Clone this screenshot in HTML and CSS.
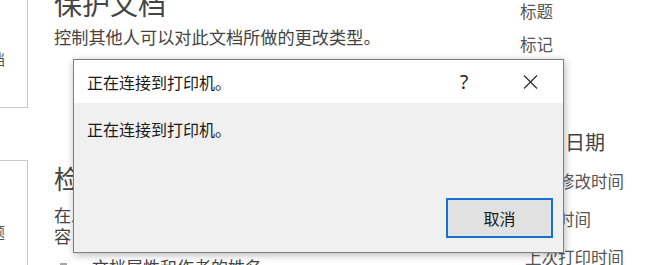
FILE: index.html
```html
<!DOCTYPE html>
<html lang="zh-CN">
<head>
<meta charset="utf-8">
<title>正在连接到打印机</title>
<link rel="stylesheet" href="styles.css">
</head>
<body>
<div class="page">
  <aside class="nav">
    <div class="nav-card first"><span class="nav-text">档</span></div>
    <div class="nav-card second"><span class="nav-text">题</span></div>
  </aside>
  <main class="info">
    <section class="protect">
      <h2 class="big-title">保护文档</h2>
      <p class="desc">控制其他人可以对此文档所做的更改类型。</p>
    </section>
    <section class="inspect">
      <h2 class="mid-title">检查文档</h2>
      <p class="desc">在发布此文件之前，请注意它包含以下内</p>
      <p class="desc">容：</p>
      <ul class="bullets">
        <li>文档属性和作者的姓名</li>
      </ul>
    </section>
  </main>
  <aside class="props">
    <div class="prop-group">
      <div class="prop-row">标题</div>
      <div class="prop-row">标记</div>
      <div class="prop-row">类别</div>
    </div>
    <div class="date-group">
      <h3 class="date-title">相关日期</h3>
      <div class="date-row">上次修改时间</div>
      <div class="date-row">创建时间</div>
      <div class="date-row">上次打印时间</div>
    </div>
  </aside>
</div>

<div class="dialog" role="dialog">
  <div class="dialog-titlebar">
    <span class="dialog-title">正在连接到打印机。</span>
    <span class="tb-btn help">?</span>
    <span class="tb-btn close">
      <svg width="15" height="14" viewBox="0 0 15 14"><path d="M1 0.5 L14 13.5 M14 0.5 L1 13.5" stroke="#2b2b2b" stroke-width="1.2" fill="none"/></svg>
    </span>
  </div>
  <div class="dialog-body">
    <p class="dialog-msg">正在连接到打印机。</p>
    <div class="dialog-actions">
      <button class="cancel-btn" type="button">取消</button>
    </div>
  </div>
</div>
</body>
</html>
```

FILE: styles.css
```css
* { box-sizing: border-box; }
html, body {
  margin: 0;
  padding: 0;
  width: 650px;
  height: 265px;
  overflow: hidden;
  background: #ffffff;
  font-family: "Noto Sans CJK SC", "Noto Sans", sans-serif;
  color: #444444;
}
.page {
  display: grid;
  grid-template-columns: 28px 440px 1fr;
  column-gap: 26px;
  align-items: start;
}
.nav {
  display: flex;
  flex-direction: column;
}
.nav-card {
  border-right: 1px solid #c9c9c9;
  border-bottom: 1px solid #c9c9c9;
  overflow: hidden;
  font-size: 15px;
  line-height: 18px;
  color: #555;
}
.nav-card.first {
  height: 108px;
  padding-top: 50px;
}
.nav-card.second {
  margin-top: 52px;
  height: 140px;
  border-top: 1px solid #c9c9c9;
  padding-top: 62px;
}
.nav-text {
  display: block;
  margin-left: -10px;
}
.big-title {
  margin: -14px 0 0;
  font-size: 28px;
  line-height: 34px;
  font-weight: 400;
  color: #444;
}
.desc {
  margin: 0;
  font-size: 17.2px;
  line-height: 21px;
  color: #444;
  white-space: nowrap;
}
.protect .desc { margin-top: 6px; }
.inspect { margin-top: 115px; }
.mid-title {
  margin: 0 0 10px;
  font-size: 26px;
  line-height: 32px;
  font-weight: 400;
  color: #444;
}
.bullets {
  margin: 10px 0 0;
  padding: 0;
  list-style: none;
}
.bullets li {
  display: flex;
  align-items: center;
  gap: 25px;
  font-size: 17px;
  line-height: 21px;
  padding-left: 6px;
}
.bullets li::before {
  content: "";
  width: 7px;
  height: 7px;
  background: #a6a6a6;
}
.props {
  display: flex;
  flex-direction: column;
  margin-top: -5px;
}
.prop-row {
  font-size: 16.5px;
  line-height: 33px;
  color: #555;
}
.date-group { padding-left: 5px; margin-top: 34px; }
.date-title {
  margin: 0 0 6px;
  font-size: 20px;
  line-height: 28px;
  font-weight: 400;
  color: #444;
}
.date-row {
  font-size: 16.5px;
  line-height: 38px;
  color: #555;
}

/* dialog overlay */
.dialog {
  position: absolute;
  left: 73px;
  top: 59px;
  width: 491px;
  height: 194px;
  border: 1px solid #7f7f7f;
  background: #f0f0f0;
  box-shadow: 1px 2px 8px rgba(0,0,0,0.28);
  display: flex;
  flex-direction: column;
  color: #1a1a1a;
}
.dialog-titlebar {
  height: 43px;
  background: #ffffff;
  display: flex;
  align-items: center;
  flex: none;
}
.dialog-title {
  flex: 1;
  padding-left: 13px;
  font-size: 16px;
  line-height: 20px;
}
.tb-btn {
  width: 66px;
  height: 43px;
  display: flex;
  align-items: center;
  justify-content: center;
}
.tb-btn.help {
  font-family: "Noto Sans", sans-serif;
  font-size: 19px;
  color: #222;
}
.dialog-body {
  flex: 1;
  display: flex;
  flex-direction: column;
  padding: 16px 10px 14px 13px;
}
.dialog-msg {
  margin: 0;
  font-size: 16px;
  line-height: 20px;
  flex: 1;
}
.dialog-actions {
  display: flex;
  justify-content: flex-end;
}
.cancel-btn {
  width: 107px;
  height: 40px;
  border: 2px solid #1b6fc9;
  background: #e1e1e1;
  font-family: "Noto Sans CJK SC", sans-serif;
  font-size: 16px;
  color: #1a1a1a;
  padding: 0;
  box-shadow: inset 0 0 0 1px #d8e6f5;
}
```
